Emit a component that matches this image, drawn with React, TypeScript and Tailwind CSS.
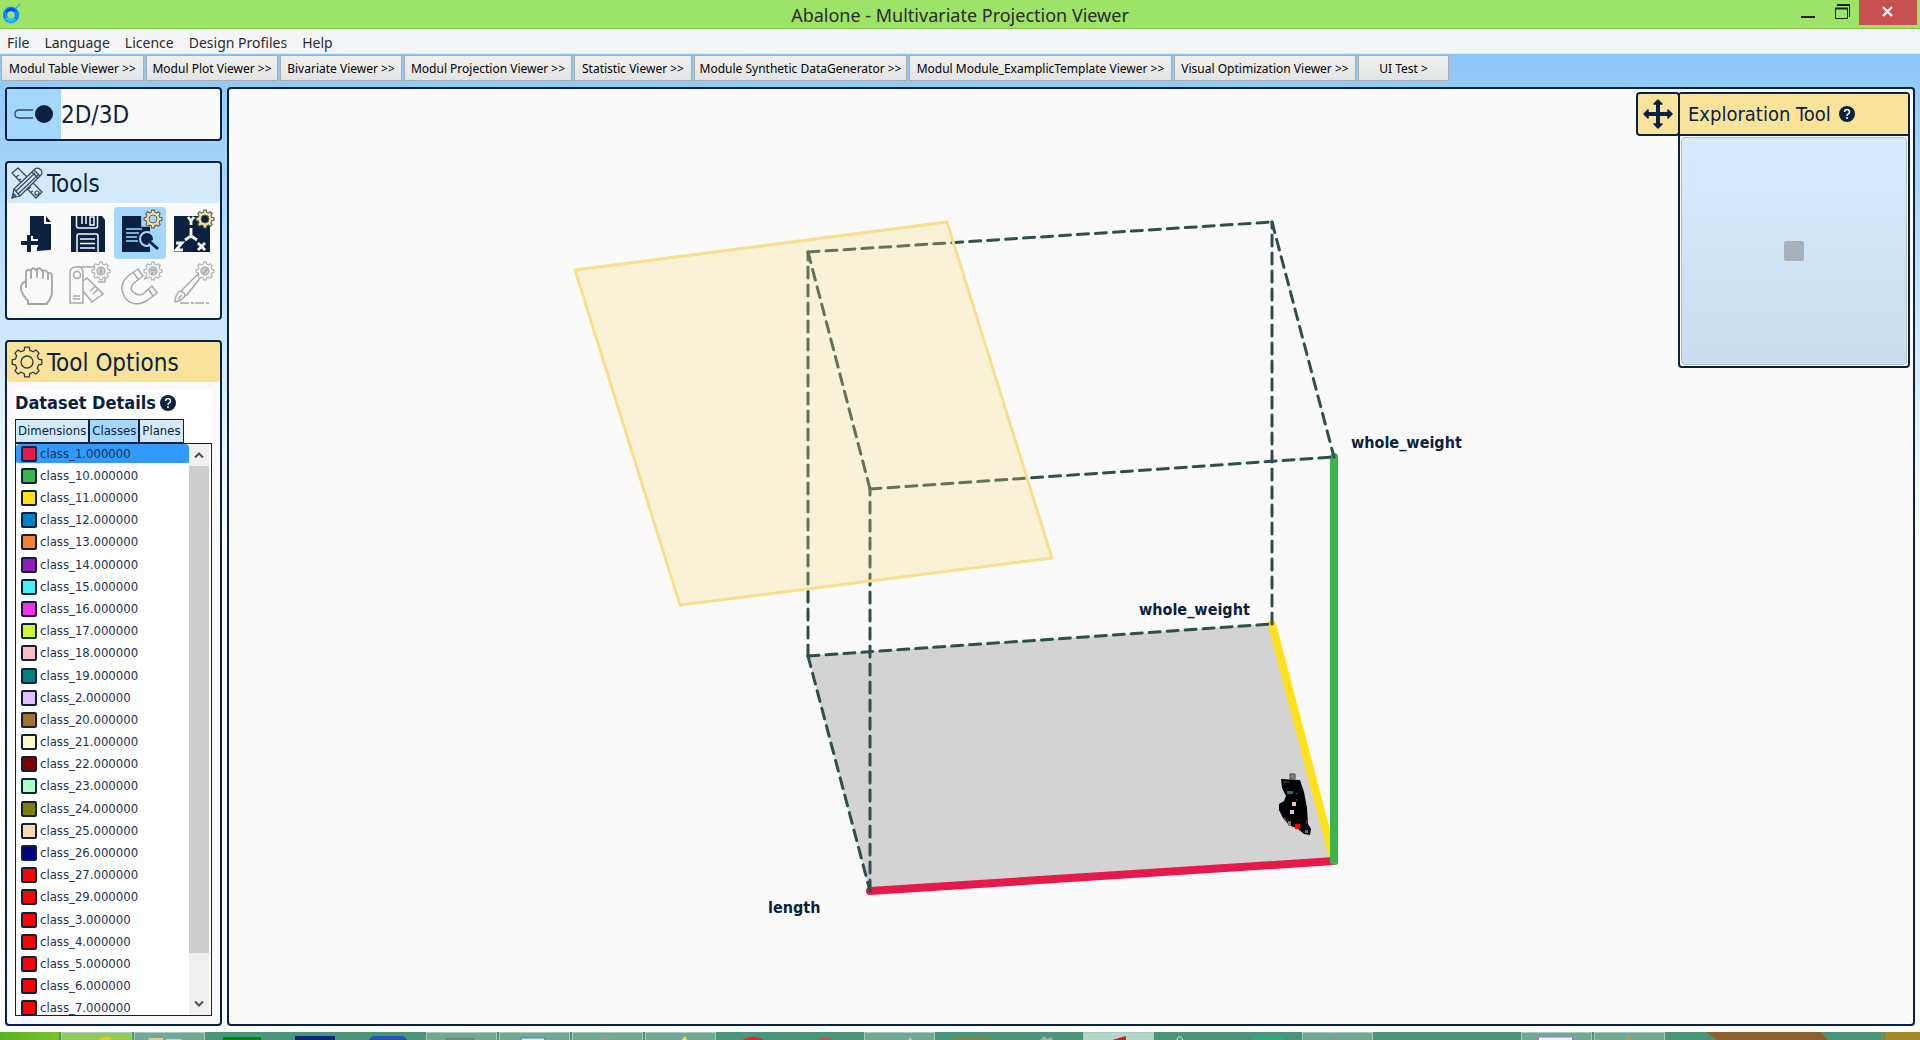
import { useState } from "react";
import type { ReactNode } from "react";

const NAVY = "#0a2240";

const menus = ["File", "Language", "Licence", "Design Profiles", "Help"];

const modules = [
  { label: "Modul Table Viewer >>", width: "w-[143px]" },
  { label: "Modul Plot Viewer >>", width: "w-[132px]" },
  { label: "Bivariate Viewer >>", width: "w-[122px]" },
  { label: "Modul Projection Viewer >>", width: "w-[168px]" },
  { label: "Statistic Viewer >>", width: "w-[118px]" },
  { label: "Module Synthetic DataGenerator >>", width: "w-[213px]" },
  { label: "Modul Module_ExamplicTemplate Viewer >>", width: "w-[263px]" },
  { label: "Visual Optimization Viewer >>", width: "w-[182px]" },
  { label: "UI Test >", width: "w-[91px]" },
];

const classes = [
  { name: "class_1.000000", color: "bg-[#e6194b]" },
  { name: "class_10.000000", color: "bg-[#3cb44b]" },
  { name: "class_11.000000", color: "bg-[#ffe119]" },
  { name: "class_12.000000", color: "bg-[#0082c8]" },
  { name: "class_13.000000", color: "bg-[#f58231]" },
  { name: "class_14.000000", color: "bg-[#911eb4]" },
  { name: "class_15.000000", color: "bg-[#46f0f0]" },
  { name: "class_16.000000", color: "bg-[#f032e6]" },
  { name: "class_17.000000", color: "bg-[#d2f53c]" },
  { name: "class_18.000000", color: "bg-[#fabebe]" },
  { name: "class_19.000000", color: "bg-[#008080]" },
  { name: "class_2.000000", color: "bg-[#e6beff]" },
  { name: "class_20.000000", color: "bg-[#aa6e28]" },
  { name: "class_21.000000", color: "bg-[#fffac8]" },
  { name: "class_22.000000", color: "bg-[#800000]" },
  { name: "class_23.000000", color: "bg-[#aaffc3]" },
  { name: "class_24.000000", color: "bg-[#808000]" },
  { name: "class_25.000000", color: "bg-[#ffd8b1]" },
  { name: "class_26.000000", color: "bg-[#000080]" },
  { name: "class_27.000000", color: "bg-[#ff0000]" },
  { name: "class_29.000000", color: "bg-[#ff0000]" },
  { name: "class_3.000000", color: "bg-[#ff0000]" },
  { name: "class_4.000000", color: "bg-[#ff0000]" },
  { name: "class_5.000000", color: "bg-[#ff0000]" },
  { name: "class_6.000000", color: "bg-[#ff0000]" },
  { name: "class_7.000000", color: "bg-[#ff0000]" },
];

// closed outline of a cog with eight teeth
function gearPath(cx: number, cy: number, outer: number, inner: number) {
  const pts: string[] = [];
  for (let i = 0; i < 8; i++) {
    const mid = (i * Math.PI) / 4 - Math.PI / 2;
    const corners: [number, number][] = [
      [-0.24, inner],
      [-0.15, outer],
      [0.15, outer],
      [0.24, inner],
    ];
    corners.forEach(([off, r]) => {
      pts.push(`${(cx + r * Math.cos(mid + off)).toFixed(2)} ${(cy + r * Math.sin(mid + off)).toFixed(2)}`);
    });
  }
  return `M${pts.join("L")}Z`;
}

function SmallGear({ disabled, dark }: { disabled?: boolean; dark?: boolean }) {
  return (
    <g strokeLinejoin="round">
      <path
        d={gearPath(39, 12, 9, 7)}
        fill={disabled ? "#fafafa" : "#f9e29a"}
        stroke={disabled ? "#b4b4b4" : "#5f6468"}
        strokeWidth="1.2"
      />
      <circle
        cx="39"
        cy="12"
        r="4"
        fill={disabled ? "#d0d0d0" : dark ? NAVY : "#a3d7ff"}
        stroke={disabled ? "#b4b4b4" : "#5f6468"}
      />
    </g>
  );
}

const NewFileIcon = () => (
  <svg viewBox="0 0 52 52" className="size-full">
    <path d="M20 9h14v8h7v25q0 1-1 1l-13 1v-6h-7z" fill={NAVY} />
    <path d="M36 9l5 6h-5z" fill={NAVY} />
    <path d="M19 29v15M11 36h17" stroke="#fafafa" strokeWidth="8" />
    <path d="M19 28v17M11 36h17" stroke={NAVY} strokeWidth="4" />
  </svg>
);

const SaveIcon = () => (
  <svg viewBox="0 0 52 52" className="size-full">
    <path d="M9 9h31l3 4v32H9z" fill={NAVY} />
    <path d="M14.500 9v10q0 2 2 2h17q2 0 2-2V9M15 45V29q0-2 2-2h17q2 0 2 2v16" fill="none" stroke="#fafafa" strokeWidth="1.500" />
    <path d="M20 9v8M24 9v8M28 10h4v8h-4z" fill="none" stroke="#fafafa" strokeWidth="1.500" />
    <path d="M18 32h15M18 36.500h15M18 41h15" stroke="#fafafa" strokeWidth="1.500" />
  </svg>
);

const SearchDocIcon = () => (
  <svg viewBox="0 0 52 52" className="size-full">
    <path d="M8 9h20v10h8v26H8z" fill={NAVY} />
    <path d="M12 22h16M12 26h13M12 30h11M12 34h12" stroke="#a3d7ff" strokeWidth="1.500" />
    <path d="M28 9v10h8" fill="none" stroke="#a3d7ff" strokeWidth="1.500" />
    <circle cx="33" cy="32" r="7" fill={NAVY} stroke="#a3d7ff" strokeWidth="2" />
    <path d="M36 35l8 8" stroke="#a3d7ff" strokeWidth="6" />
    <path d="M35 34l9 8" stroke={NAVY} strokeWidth="3" />
    <SmallGear />
  </svg>
);

const AxesIcon = () => (
  <svg viewBox="0 0 52 52" className="size-full">
    <path d="M8 9h36v36H8z" fill={NAVY} />
    <path
      d="M25 21v8l-6 4M25 29l6 4M22 10l3 4 3-4M25 13v5M10 36h6l-6 7h7M32 36l7 7M39 36l-7 7"
      fill="none"
      stroke="#fafafa"
      strokeWidth="2.800"
    />
    <SmallGear dark />
  </svg>
);

const HandIcon = () => (
  <svg viewBox="0 0 52 52" className="size-full" fill="none" stroke="#a3a3a3" strokeWidth="1.800" strokeLinejoin="round" strokeLinecap="round">
    <path d="M18 42q-5-5-7-11-1-5 3-8l2-1V13q2-4 5-1 1-5 5-1 4-4 6 1 4-2 6 2 4-1 4 4v14q0 7-5 12v1H18zM16 23v5M21 12v7M27 11v7M33 12v7M38 15v5" />
  </svg>
);

const SwatchesIcon = () => (
  <svg viewBox="0 0 52 52" className="size-full" fill="none" stroke="#a8a8a8" strokeWidth="1.500">
    <path d="M8 44V14q0-6 6-6h2q5 0 5 6v30zM21 22l4-3 16 16-11 8-9-11M16 8h18v4M36 23h7v-4" />
    <circle cx="15" cy="16" r="3.500" />
    <path d="M11 37h7M11 40h7M28 32l6-5M31 35l5-5" />
    <SmallGear disabled />
    <path d="M39 9v6" />
  </svg>
);

const MagnetIcon = () => (
  <svg viewBox="0 0 52 52" className="size-full" fill="none" stroke="#a8a8a8" strokeWidth="1.500" strokeLinejoin="round">
    <path d="M24 10l5 7-9 7q-5 5-1 9t10 2l9-8 5 7-9 7q-13 8-22-1-9-13 2-23zM19 13l5 7M34 30l5 7M30 20l5-3" />
    <SmallGear disabled />
    <path d="M36 11h6M39 13l-2 3" />
  </svg>
);

const BrushIcon = () => (
  <svg viewBox="0 0 52 52" className="size-full" fill="none" stroke="#a8a8a8" strokeWidth="1.500" strokeLinejoin="round">
    <path d="M9 43q0-7 5-11 5 1 5 5-4 5-10 6zM15 32L32 15l3 3-15 19M12 40l4-4" />
    <path d="M14 44h29" strokeDasharray="9 2 3 1" />
    <SmallGear disabled />
    <path d="M37 15l5-6" />
  </svg>
);

const tools: { label: string; icon: ReactNode; disabled?: boolean }[] = [
  { label: "New dataset", icon: <NewFileIcon /> },
  { label: "Save", icon: <SaveIcon /> },
  { label: "Dataset details", icon: <SearchDocIcon /> },
  { label: "Axes", icon: <AxesIcon /> },
  { label: "Grab", icon: <HandIcon />, disabled: true },
  { label: "Swatches", icon: <SwatchesIcon />, disabled: true },
  { label: "Magnet", icon: <MagnetIcon />, disabled: true },
  { label: "Brush", icon: <BrushIcon />, disabled: true },
];

function HelpBadge() {
  return (
    <button aria-label="Help" className="size-4 shrink-0">
      <svg viewBox="0 0 16 16" className="size-full">
        <circle cx="8" cy="8" r="8" fill={NAVY} />
        <path d="M5.500 6q.2-2.500 2.500-2.500T10.500 6q0 1.200-1.200 1.800T8 10" fill="none" stroke="#fff" strokeWidth="1.500" />
        <circle cx="8" cy="12" r="1" fill="#fff" />
      </svg>
    </button>
  );
}

function TitleBar() {
  return (
    <header className="flex h-[29px] shrink-0 border-b border-[#85c04e] bg-[#9de367]">
      <div className="flex flex-1 items-center pl-[3px]">
        <svg viewBox="0 0 18 22" className="h-[22px] w-[18px]">
          <path d="M12 6l5-5" stroke="#3aa5d8" strokeWidth="1.500" />
          <circle cx="8" cy="12" r="6" fill="none" stroke="#0a8cff" strokeWidth="4.500" />
          <path d="M3 9a6 6 0 0 1 9-1" fill="none" stroke="#0048f0" strokeWidth="3" />
          <path d="M3 15a6 6 0 0 0 9 1" fill="none" stroke="#1ec8ff" strokeWidth="3" />
        </svg>
      </div>
      <h1 className="pt-px font-['Noto_Sans',sans-serif] text-lg leading-7 text-[#2b2b2b]">
        Abalone - Multivariate Projection Viewer
      </h1>
      <div className="flex flex-1 justify-end pr-[3px]">
        <button aria-label="Minimize" className="h-[25px] w-9">
          <svg viewBox="0 0 36 25" className="size-full">
            <path d="M14 17h14" stroke="#222" strokeWidth="2" />
          </svg>
        </button>
        <button aria-label="Restore" className="h-[25px] w-9">
          <svg viewBox="0 0 36 25" className="size-full" fill="none" stroke="#222">
            <path d="M12.500 8.500h12v10h-12zM14 4.500h12.500V17" />
            <path d="M12 8.500h13M14 5h13" strokeWidth="2" />
          </svg>
        </button>
        <button aria-label="Close" className="h-[25px] w-[58px] bg-[#c75050]">
          <svg viewBox="0 0 58 25" className="size-full">
            <path d="M24 7l9 9M33 7l-9 9" stroke="#fff" strokeWidth="2.200" />
          </svg>
        </button>
      </div>
    </header>
  );
}

function ToolsPanel() {
  const [active, setActive] = useState("Dataset details");
  return (
    <section className="h-[159px] rounded-sm border-2 border-[#0a2240] bg-[#fafafa]">
      <h2 className="flex h-10 items-center gap-1 rounded-sm bg-[#d4eafb] pl-1 text-2xl">
        <svg viewBox="0 0 32 32" className="size-8" stroke="#33475f" strokeWidth="1.200" strokeLinejoin="round">
          <path d="M1 6l6-5 24 24-6 6z" fill="#d4eafb" />
          <path d="M5 10l3-2M8 13l2-1M11 16l3-2M14 19l2-1M17 22l3-2M20 25l2-1" />
          <circle cx="26" cy="26" r="2" fill="none" />
          <path d="M1 31l2-9L24 2q3-2 6 1 2 3 0 5L9 29z" fill="#d4eafb" />
          <path d="M3 22l6 7M21 5l6 6M23 3l6 6M5 24L24 6M7 27L27 8M1 31l4-2-2-2z" fill="none" />
        </svg>
        <span className="pt-0.5">Tools</span>
      </h2>
      <div className="grid grid-cols-[repeat(4,52px)] pt-1 pl-[3px]">
        {tools.map((t) => (
          <button
            key={t.label}
            aria-label={t.label}
            disabled={t.disabled}
            onClick={() => setActive(t.label)}
            className={active === t.label ? "size-[52px] rounded-sm bg-[#a3d7ff]" : "size-[52px]"}
          >
            {t.icon}
          </button>
        ))}
      </div>
    </section>
  );
}

function OptionsPanel() {
  const [tab, setTab] = useState("Classes");
  const [selected, setSelected] = useState("class_1.000000");
  return (
    <section className="flex min-h-0 flex-1 flex-col rounded-sm border-2 border-[#0a2240] bg-[#fafafa]">
      <h2 className="flex h-10 shrink-0 items-center gap-1 rounded-sm bg-[#f9e29a] pl-1 text-2xl">
        <svg viewBox="0 0 32 32" className="size-8" fill="none" stroke="#2d3a45" strokeWidth="1.300" strokeLinejoin="round">
          <path d={gearPath(16, 16, 15, 12)} />
          <circle cx="16" cy="16" r="6" />
        </svg>
        <span className="pt-0.5">Tool Options</span>
      </h2>
      <div className="mx-2 mt-2 mb-2 flex min-h-0 flex-1 flex-col bg-white">
        <h3 className="flex h-[29px] shrink-0 items-center gap-1 pb-1 text-lg font-bold">
          Dataset Details <HelpBadge />
        </h3>
        <div role="tablist" className="flex h-6 shrink-0 text-[13px]">
          {["Dimensions", "Classes", "Planes"].map((name) => (
            <button
              key={name}
              role="tab"
              aria-selected={tab === name}
              onClick={() => setTab(name)}
              className={
                tab === name
                  ? "border border-[#0a2240] bg-[#a3d7ff] px-0.5"
                  : "border border-[#0a2240] bg-[#d4eafb] px-0.5"
              }
            >
              {name}
            </button>
          ))}
        </div>
        <div className="flex min-h-0 flex-1 border border-[#0a2240]">
          <ul role="listbox" aria-label="Classes" className="grid h-[577px] min-w-0 flex-1 auto-rows-fr self-start text-[#1c3150] [clip-path:inset(0_0_6px_0)]">
            {classes.map((c) => (
              <li
                key={c.name}
                role="option"
                aria-selected={selected === c.name}
                onClick={() => setSelected(c.name)}
                className={
                  selected === c.name
                    ? "flex items-center gap-[3px] rounded-sm bg-[#3399ff] bg-clip-content pb-[3px] text-[13px] leading-4"
                    : "flex items-center gap-[3px] pb-[3px] text-[13px] leading-4"
                }
              >
                <span className={`ml-[5px] size-4 rounded-xs border-2 border-[#0a2240] ${c.color}`} />
                {c.name}
              </li>
            ))}
          </ul>
          <div className="flex w-[22px] shrink-0 flex-col border-r-2 border-white bg-[#f0f0f0]">
            <button aria-label="Scroll up" className="flex h-[22px] items-center justify-center">
              <svg viewBox="0 0 10 6" className="h-1.5 w-2.5" fill="none" stroke="#505050" strokeWidth="2">
                <path d="M1 5.500l4-4 4 4" />
              </svg>
            </button>
            <div className="flex-[488] bg-[#cdcdcd]" />
            <div className="flex-[40]" />
            <button aria-label="Scroll down" className="flex h-[22px] items-center justify-center">
              <svg viewBox="0 0 10 6" className="h-1.5 w-2.5" fill="none" stroke="#505050" strokeWidth="2">
                <path d="M1 .5l4 4 4-4" />
              </svg>
            </button>
          </div>
        </div>
      </div>
    </section>
  );
}

function Projection() {
  return (
    <svg viewBox="0 0 1684 935" className="absolute inset-0 size-full" role="img" aria-label="3D projection">
      <g transform="translate(-229 -89)">
        <path d="M808 656L1272 624L1334 861L870 891Z" fill="#d3d3d3" />
        <path d="M1272 624L1334 861" stroke="#ffe119" strokeWidth="8" strokeLinecap="round" />
        <path d="M870 891L1334 861" stroke="#e6194b" strokeWidth="8" strokeLinecap="round" />
        <path d="M1334 861V457" stroke="#3cb44b" strokeWidth="8" strokeLinecap="round" />
        <g stroke="#2f4f4f" strokeWidth="3" strokeLinecap="round" strokeDasharray="11 7">
          <path d="M808 656L1272 624" />
          <path d="M808 656L870 891" />
          <path d="M808 656V252" />
          <path d="M870 891V489" />
          <path d="M1272 624V222" />
          <path d="M808 252L1272 222" />
          <path d="M808 252L870 489" />
          <path d="M870 489L1334 457" />
          <path d="M1272 222L1334 457" />
        </g>
        <path d="M575 270L947 222L1052 558L680 605Z" fill="#fcdc75" fillOpacity=".26" stroke="#f9df8c" strokeWidth="3" strokeLinejoin="round" />
        {/* data points */}
        <path
          d="M1281 779L1300 780L1304 792L1307 808L1308 824L1311 829L1310 835L1304 834L1298 829L1289 825L1283 818L1279 810V804L1284 801L1286 796L1282 788Z"
          fill="#000"
        />
        <path d="M1290 774h5v5h-5z" fill="#8a8580" stroke="#444" />
        <path d="M1287 791h6v3h-6z" fill="#008080" />
        <path d="M1292 802h4v4h-4z" fill="#fabebe" />
        <path d="M1290 810h4v4h-4z" fill="#e6beff" />
        <path d="M1288 821h3v5h-3z" fill="#8f6f6f" />
        <path d="M1295 824h5v5h-5z" fill="#ff0000" />
        <path d="M1305 830h3v3h-3z" fill="#3f7f78" />
        <path d="M1283 782h6M1296 794l2-1M1296 801l1-2M1284 817l2 4M1306 824l1-4" stroke="#5d4a60" />
        <g fill={NAVY} fontSize="16" fontWeight="bold">
          <text x="1351" y="448">whole_weight</text>
          <text x="1139" y="615">whole_weight</text>
          <text x="768" y="913">length</text>
        </g>
      </g>
    </svg>
  );
}

function ExplorationTool() {
  return (
    <aside className="absolute top-[3px] right-[3px] flex items-start">
      <button aria-label="Move" className="-mr-0.5 flex h-11 w-11 items-center justify-center rounded-sm border-2 border-[#0a2240] bg-[#f9e29a]">
        <svg viewBox="0 0 30 30" className="size-[30px]" fill={NAVY} stroke={NAVY} strokeLinejoin="round">
          <path d="M15 4v22M4 15h22" strokeWidth="4" />
          <path d="M15 1l4 4h-8zM15 29l4-4h-8zM1 15l4-4v8zM29 15l-4-4v8z" strokeWidth="1.500" />
        </svg>
      </button>
      <div className="w-[232px] rounded-sm border-2 border-[#0a2240] bg-[#fafafa]">
        <h2 className="flex h-[42px] items-center gap-2 border-b-2 border-[#0a2240] bg-[#f9e29a] pl-2 text-xl">
          Exploration Tool <HelpBadge />
        </h2>
        <div className="m-px flex h-[228px] items-center justify-center rounded-sm border border-[#b9bec3] bg-linear-to-b from-[#d8ebff] to-[#c9deef]">
          <div className="size-5 rounded-xs bg-[#a8b1b9]" />
        </div>
      </div>
    </aside>
  );
}

// only the top edge of each entry is visible above the screen border
const tasks: { frame?: string; icon?: ReactNode }[] = [
  { frame: "bg-[#93c954]", icon: <path d="M37 8q4-6 16-3l-5 3z" fill="#f5c518" /> },
  { frame: "bg-[#72a996]", icon: <path d="M14 5h15v3H14zM32 6h16v2H32z" fill="#dfcf8b" /> },
  { icon: <path d="M16 5h38v3H16z" fill="#008c00" /> },
  { icon: <path d="M15 4h40v4H15z" fill="#0b2474" /> },
  { icon: <path d="M16 8q2-4 6-4h26q4 0 6 4z" fill="#2d4fae" /> },
  { frame: "bg-[#72a996]", icon: <path d="M20 8V6h28v2" fill="none" stroke="#666" /> },
  { frame: "bg-[#72a996]", icon: <path d="M22 8V5h24v3z" fill="#dcebfa" stroke="#4d7bb0" /> },
  { frame: "bg-[#72a996]", icon: <path d="M28 6l8-1 4 3" fill="none" stroke="#9a9a9a" strokeWidth="2" /> },
  { frame: "bg-[#72a996]", icon: <path d="M36 8l4-5 3 5z" fill="#e9e53b" /> },
  { icon: <path d="M24 8q11-7 22 0z" fill="#ff1e28" /> },
  { icon: <path d="M26 8q8-5 17 0z" fill="#d94d42" /> },
  { frame: "bg-[#72a996]", icon: <path d="M43 8l4-4 2 4z" fill="#eeb981" /> },
  { icon: <path d="M17 5h36v3H17z" fill="#8b8438" /> },
  { icon: <path d="M30 8l4-4 3 3 4-2 2 3z" fill="#b1ad96" /> },
  { frame: "bg-[#b4d5c9]", icon: <path d="M26 8l17-5v5z" fill="#e21010" /> },
  { icon: <path d="M21 8q2-7 6 0" fill="none" stroke="#ddd" /> },
  { icon: <path d="M24 5h30v3H24z" fill="#1db56f" /> },
  { frame: "bg-[#72a996]", icon: <path d="M25 8q8-5 17 0z" fill="#ef6f52" /> },
  {},
  {},
  { frame: "bg-[#72a996]", icon: <path d="M17 4h35v4H17z" fill="#f4f2ff" stroke="#a86be0" /> },
  { frame: "bg-[#72a996]", icon: <path d="M32 8l3-5 3 5z" fill="#ef8a1d" /> },
];

function Taskbar() {
  return (
    <footer className="flex h-2 shrink-0 gap-0.5 overflow-hidden bg-[#4b957a]">
      <button aria-label="Start" className="w-[59px] shrink-0 bg-linear-to-r from-[#56b31c] to-[#79c42b]" />
      {tasks.map((t, i) => (
        <button
          key={i}
          aria-label={`Task ${i + 1}`}
          className={`w-[71px] shrink-0 ${t.frame ? `border-x border-t border-[#a5cdbd] ${t.frame}` : ""}`}
        >
          <svg viewBox="0 0 71 8" className="h-2 w-full">
            {t.icon}
          </svg>
        </button>
      ))}
      <svg viewBox="0 0 216 8" className="h-2 w-[216px] shrink-0 self-start">
        <path d="M39 0H154l7 8H50z" fill="#8d6030" />
        <path d="M214 0h2v8h-1z" fill="#a48927" />
      </svg>
      <div className="flex-1 bg-[#a48927]" />
    </footer>
  );
}

export default function App() {
  const [threeD, setThreeD] = useState(true);

  return (
    <div className="flex h-screen flex-col overflow-hidden bg-white font-['DejaVu_Sans_Condensed','DejaVu_Sans',sans-serif] text-[#0a2240]">
      <TitleBar />
      <nav className="flex h-[25px] shrink-0 items-center gap-[15px] border-b border-[#e6e8ea] bg-[#f4f5f7] pt-[3px] pl-[7px] font-['Noto_Sans',sans-serif] text-sm text-[#2b2b2b]">
        {menus.map((m) => (
          <button key={m}>{m}</button>
        ))}
      </nav>

      <div className="flex min-h-0 flex-1 flex-col bg-linear-to-b from-[#8bc7f8] to-white to-50%">
        <div className="flex h-[33px] shrink-0 gap-0.5 pt-px pl-px">
          {modules.map((m) => (
            <button
              key={m.label}
              className={`h-[26px] shrink-0 border border-[#adadad] bg-linear-to-b from-[#f0f0f0] to-[#e3e5e5] pt-px text-center font-['Noto_Sans',sans-serif] text-xs whitespace-nowrap text-black ${m.width}`}
            >
              {m.label}
            </button>
          ))}
        </div>

        <div className="flex min-h-0 flex-1 gap-[5px] px-[5px] pb-1.5">
          <div className="flex w-[217px] shrink-0 flex-col gap-5">
            <section className="h-[54px] rounded-sm border-2 border-[#0a2240] bg-[#fafafa]">
              <button
                aria-pressed={threeD}
                onClick={() => setThreeD(!threeD)}
                className="flex h-full w-full items-center text-2xl"
              >
                <svg viewBox="0 0 54 50" className="h-full w-[54px] bg-[#a3d7ff]">
                  <path d="M26 21H12q-4 0-4 4t4 4h14" fill="none" stroke="#2b4668" strokeWidth="1.300" />
                  <circle cx="37" cy="25" r="9" fill={NAVY} />
                </svg>
                <span className="pt-0.5">2D/3D</span>
              </button>
            </section>
            <ToolsPanel />
            <OptionsPanel />
          </div>

          <main className="relative min-w-0 flex-1 rounded-sm border-2 border-[#0a2240] bg-[#fafafa]">
            <Projection />
            <ExplorationTool />
          </main>
        </div>
      </div>

      <Taskbar />
    </div>
  );
}
